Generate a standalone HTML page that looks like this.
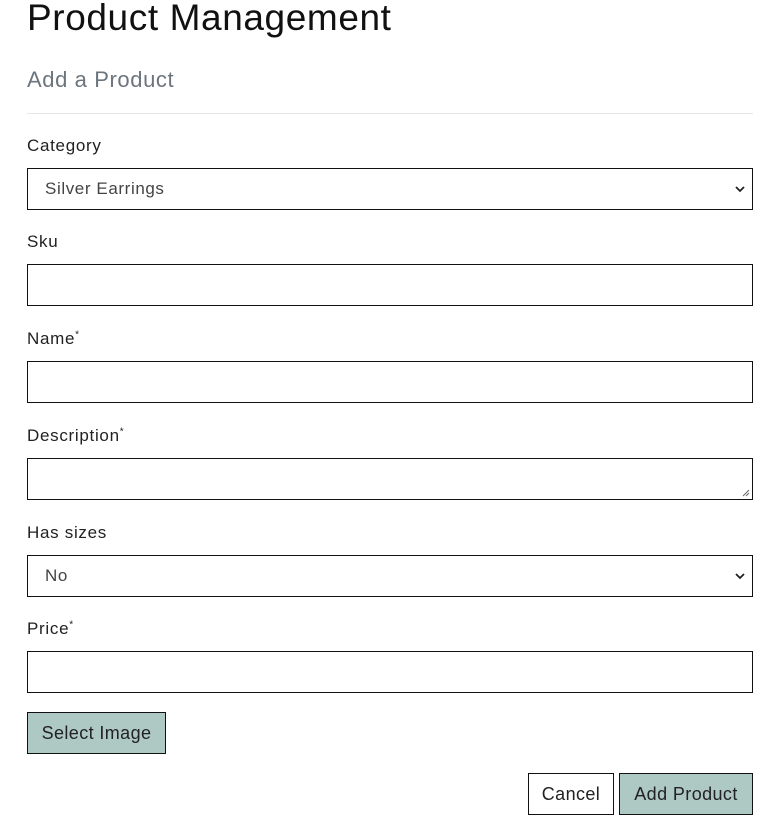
<!DOCTYPE html>
<html><head><style>
body{margin:0;width:769px;height:821px;background:#fff;font-family:"Liberation Sans",sans-serif;color:#222;position:relative;overflow:hidden}
.a{position:absolute;white-space:nowrap}
.h1{left:27px;top:-3px;font-size:37px;letter-spacing:0.6px;color:#111}
.h2{left:27px;top:67px;font-size:22px;letter-spacing:0.6px;color:#6c757d}
.hr{position:absolute;left:27px;width:726px;top:113px;height:1px;background:#e6e6e6}
.lbl{left:27px;font-size:17px;letter-spacing:0.7px;color:#222}
.lbl sup{font-size:10px}
.box{position:absolute;left:27px;width:724px;height:40px;border:1px solid #111;background:#fff}
.box span{position:absolute;left:17px;top:10px;font-size:17px;letter-spacing:0.6px;color:#444}
.chev{position:absolute;right:6px;top:14px}
.btn{position:absolute;border:1px solid #111;font-size:18px;letter-spacing:0.4px;color:#222;text-align:center;line-height:40px;height:40px;box-sizing:content-box}
</style></head><body>
<div class="a h1">Product Management</div>
<div class="a h2">Add a Product</div>
<div class="hr"></div>

<div class="a lbl" style="top:136px">Category</div>
<div class="box" style="top:168px"><span>Silver Earrings</span><svg class="chev" width="12" height="12" viewBox="0 0 12 12"><path d="M2 4l4 4 4-4" fill="none" stroke="#222" stroke-width="1.8"/></svg></div>

<div class="a lbl" style="top:232px">Sku</div>
<div class="box" style="top:264px"></div>

<div class="a lbl" style="top:329px">Name<sup>*</sup></div>
<div class="box" style="top:361px"></div>

<div class="a lbl" style="top:426px">Description<sup>*</sup></div>
<div class="box" style="top:458px"><svg style="position:absolute;right:2px;bottom:2px" width="8" height="8" viewBox="0 0 8 8"><path d="M7 1L1 7M7 4L4 7" stroke="#666" stroke-width="1"/></svg></div>

<div class="a lbl" style="top:523px">Has sizes</div>
<div class="box" style="top:555px"><span>No</span><svg class="chev" width="12" height="12" viewBox="0 0 12 12"><path d="M2 4l4 4 4-4" fill="none" stroke="#222" stroke-width="1.8"/></svg></div>

<div class="a lbl" style="top:619px">Price<sup>*</sup></div>
<div class="box" style="top:651px"></div>

<div class="btn" style="left:27px;top:712px;width:137px;background:#aec8c4">Select Image</div>
<div class="btn" style="left:528px;top:773px;width:84px;background:#fff">Cancel</div>
<div class="btn" style="left:619px;top:773px;width:132px;background:#aec8c4">Add Product</div>
</body></html>
